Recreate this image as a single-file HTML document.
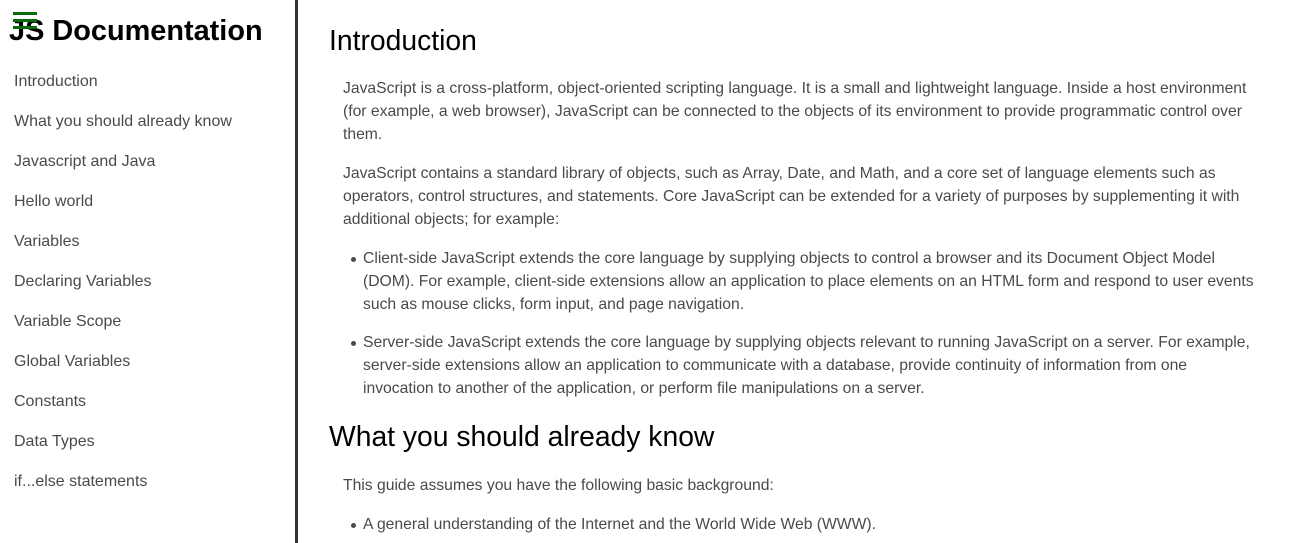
<!DOCTYPE html>
<html><head><meta charset="utf-8"><style>
*{margin:0;padding:0;box-sizing:border-box}
html,body{width:1295px;height:543px;overflow:hidden;background:#fff;font-family:"Liberation Sans",Arial,sans-serif}
#side{position:absolute;left:0;top:0;width:295px;height:543px}
#bar{position:absolute;left:295px;top:0;width:3px;height:543px;background:#333}
#logo{position:absolute;left:9px;top:15px;font-size:28.9px;font-weight:bold;color:#000;white-space:nowrap}
.g{position:absolute;left:13px;width:24px;height:3px;background:#0a6b0a}
#nav a{position:absolute;left:14px;font-size:16px;color:#4a4a4a;text-decoration:none;white-space:nowrap}
#main{position:absolute;left:329px;top:0;width:940px;color:#4a4a4a}
h1{position:absolute;left:0;font-size:28.3px;font-weight:normal;color:#000;white-space:nowrap}
.p{position:absolute;left:14px;width:915px;font-size:15.7px;line-height:23px}
ul{position:absolute;left:14px;width:915px;font-size:15.7px;line-height:23px;list-style:none}
li{position:relative;padding-left:20px}
li:before{content:"";position:absolute;left:8px;top:10px;width:5px;height:5px;border-radius:50%;background:#4a4a4a}
</style></head><body>
<div id="side">
<div id="logo">JS Documentation</div>
<div class="g" style="top:12px"></div><div class="g" style="top:19px"></div><div class="g" style="top:26px"></div>
<div id="nav">
<a style="top:73px">Introduction</a>
<a style="top:113px">What you should already know</a>
<a style="top:153px">Javascript and Java</a>
<a style="top:193px">Hello world</a>
<a style="top:233px">Variables</a>
<a style="top:273px">Declaring Variables</a>
<a style="top:313px">Variable Scope</a>
<a style="top:353px">Global Variables</a>
<a style="top:393px">Constants</a>
<a style="top:433px">Data Types</a>
<a style="top:473px">if...else statements</a>
</div></div>
<div id="bar"></div>
<div id="main">
<h1 style="top:24px">Introduction</h1>
<div class="p" style="top:77px">JavaScript is a cross-platform, object-oriented scripting language. It is a small and lightweight language. Inside a host environment (for example, a web browser), JavaScript can be connected to the objects of its environment to provide programmatic control over them.</div>
<div class="p" style="top:162px">JavaScript contains a standard library of objects, such as Array, Date, and Math, and a core set of language elements such as operators, control structures, and statements. Core JavaScript can be extended for a variety of purposes by supplementing it with additional objects; for example:</div>
<ul style="top:247px">
<li>Client-side JavaScript extends the core language by supplying objects to control a browser and its Document Object Model (DOM). For example, client-side extensions allow an application to place elements on an HTML form and respond to user events such as mouse clicks, form input, and page navigation.</li>
<li style="margin-top:15px">Server-side JavaScript extends the core language by supplying objects relevant to running JavaScript on a server. For example, server-side extensions allow an application to communicate with a database, provide continuity of information from one invocation to another of the application, or perform file manipulations on a server.</li>
</ul>
<h1 style="top:420px">What you should already know</h1>
<div class="p" style="top:474px">This guide assumes you have the following basic background:</div>
<ul style="top:513px"><li>A general understanding of the Internet and the World Wide Web (WWW).</li></ul>
</div>
</body></html>
